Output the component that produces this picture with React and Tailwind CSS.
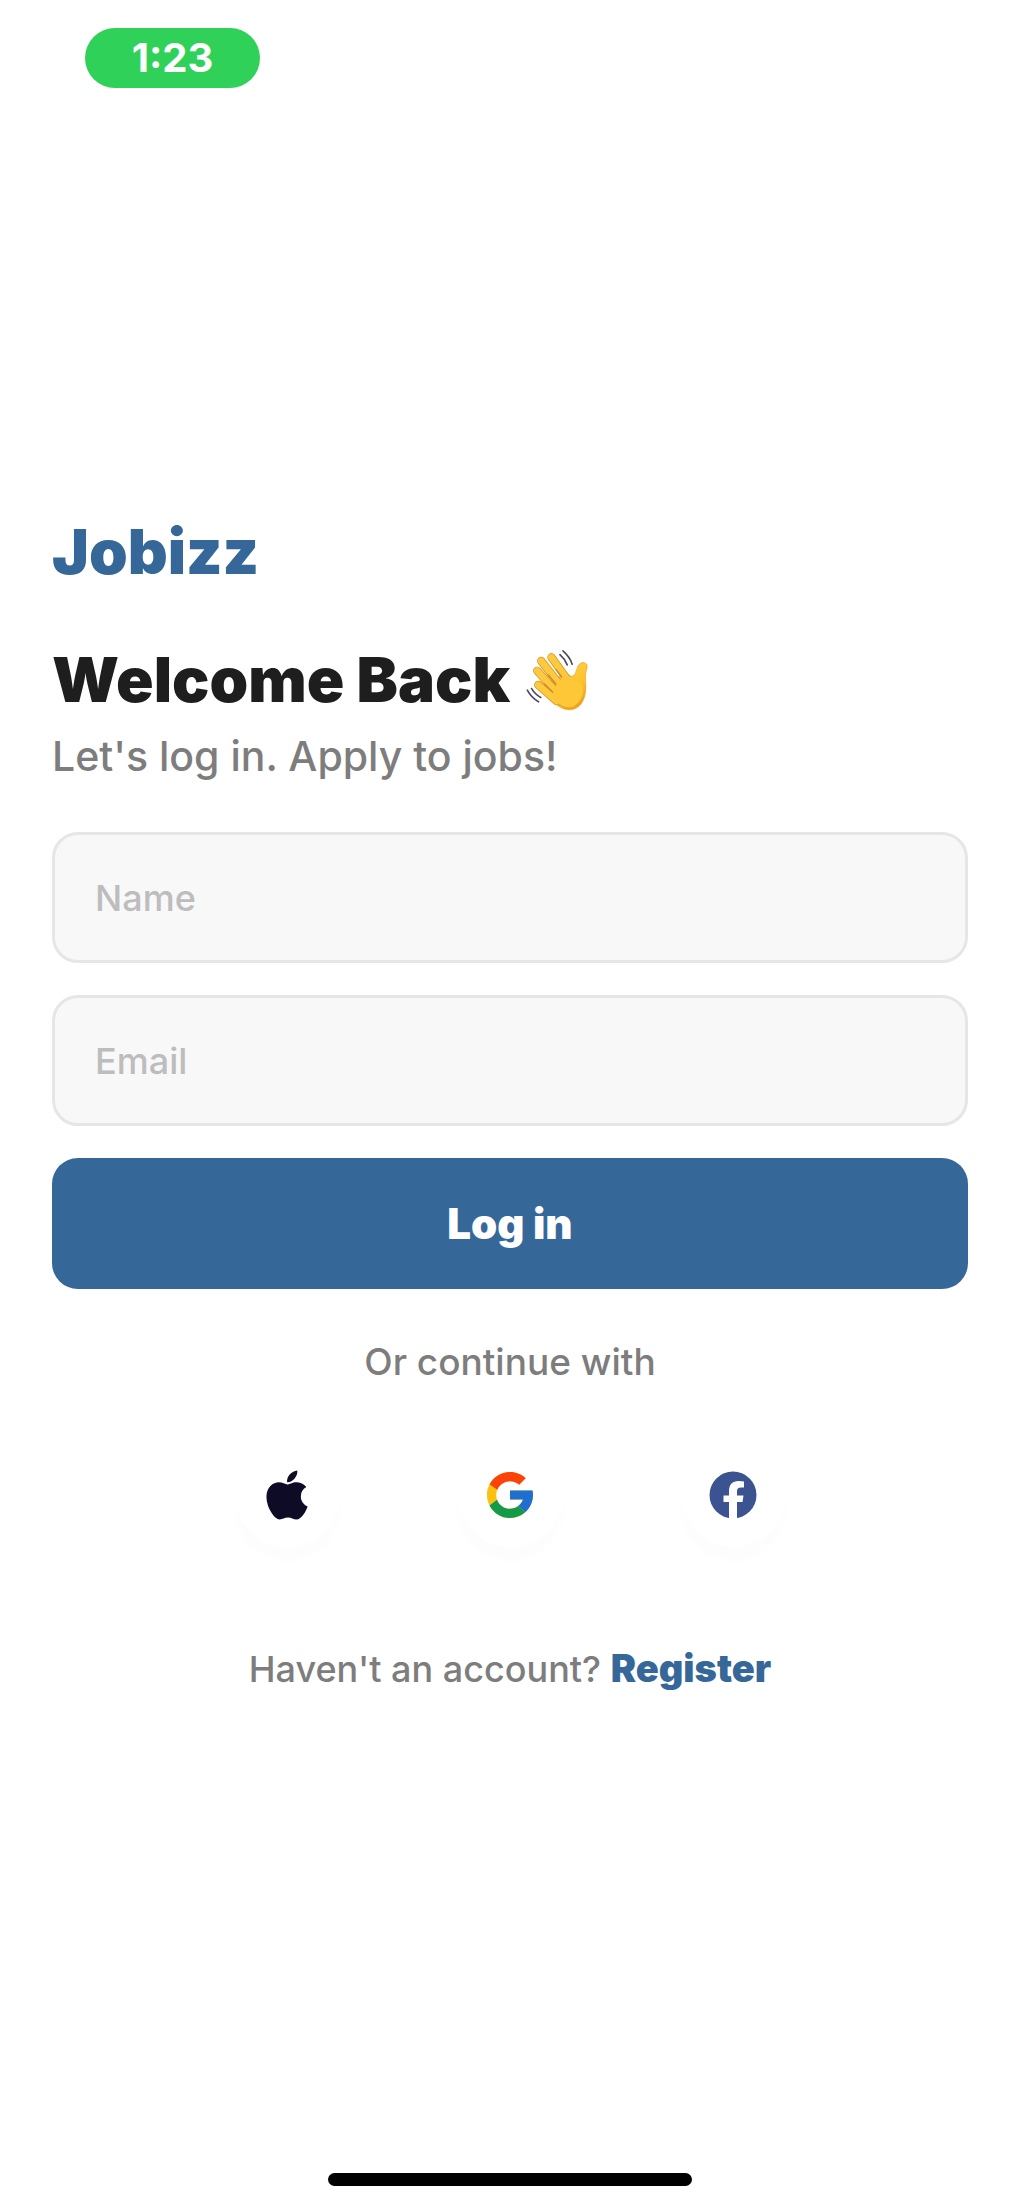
import { FaApple } from "react-icons/fa";

function WavingHand() {
  const fingers = [
    "M160 79 L208 146",
    "M129 90 L190 168",
    "M117 120 L175 185",
    "M120 163 L176 212",
  ];
  return (
    <svg viewBox="84 54 186 188" className="size-[62px]" role="img" aria-label="Waving hand">
      <defs>
        <linearGradient id="palm" x1="0" y1="0" x2="0.4" y2="1">
          <stop offset="0" stopColor="#ffd04a" />
          <stop offset="0.6" stopColor="#fdc52f" />
          <stop offset="1" stopColor="#eda51d" />
        </linearGradient>
      </defs>
      <path
        d="M188 130 L207 127 L217 136 Q231 139 236 119 Q241 96 256 95 Q271 97 268 110 Q260 132 264 156 C267 194 256 229 226 237 C201 243 180 229 160 209 L154 190 Z"
        fill="url(#palm)"
        stroke="#e4a024"
        strokeWidth="2"
      />
      {fingers.map((d) => (
        <g key={d} fill="none" strokeLinecap="round">
          <path d={d} stroke="#d9962b" strokeWidth="25" />
          <path d={d} stroke="#fdca3d" strokeWidth="20" />
        </g>
      ))}
      <path
        d="M176 162 L198 134 L220 139 Q247 150 257 170 Q257 212 226 229 Q205 236 180 218 L161 201 Z"
        fill="#fdc738"
      />
      <g fill="none" stroke="#c98a35" strokeWidth="4" strokeLinecap="round">
        <path d="M174 116 L191 138" />
        <path d="M150 132 L174 160" />
        <path d="M139 160 L164 184" />
      </g>
      <g fill="none" stroke="#4b4a5c" strokeWidth="5" strokeLinecap="round">
        <path d="M195 60 Q215 77 223 100" />
        <path d="M186 71 Q201 84 208 102" />
        <path d="M87 179 Q99 202 121 214" />
        <path d="M100 174 Q111 192 128 201" />
      </g>
    </svg>
  );
}

function GoogleLogo() {
  return (
    <svg viewBox="4 4 40 40" className="size-[46px]" aria-hidden="true">
      <path fill="#fbc112" d="M43.611,20.083H42V20H24v8h11.303c-1.649,4.657-6.08,8-11.303,8c-6.627,0-12-5.373-12-12c0-6.627,5.373-12,12-12c3.059,0,5.842,1.154,7.961,3.039l5.657-5.657C34.046,6.053,29.268,4,24,4C12.955,4,4,12.955,4,24c0,11.045,8.955,20,20,20c11.045,0,20-8.955,20-20C44,22.659,43.862,21.35,43.611,20.083z" />
      <path fill="#fb4208" d="M6.306,14.691l6.571,4.819C14.655,15.108,18.961,12,24,12c3.059,0,5.842,1.154,7.961,3.039l5.657-5.657C34.046,6.053,29.268,4,24,4C16.318,4,9.656,8.337,6.306,14.691z" />
      <path fill="#139a4b" d="M24,44c5.166,0,9.86-1.977,13.409-5.192l-6.19-5.238C29.211,35.091,26.715,36,24,36c-5.202,0-9.619-3.317-11.283-7.946l-6.522,5.025C9.505,39.556,16.227,44,24,44z" />
      <path fill="#1f6fd0" d="M43.611,20.083H42V20H24v8h11.303c-0.792,2.237-2.231,4.166-4.087,5.571l6.193,5.238C36.971,39.205,44,34,44,24C44,22.659,43.862,21.35,43.611,20.083z" />
    </svg>
  );
}

function FacebookLogo() {
  return (
    <svg viewBox="0 0 48 48" className="size-[48px]" aria-hidden="true">
      <circle cx="24" cy="24" r="23.5" fill="#3b5390" />
      <path fill="#fff" d="M20 48V31h-5.500v-6.500H20v-4.500c0-6.500 3.500-10 9.500-10 2 0 4 .2 5.500.5v6h-3c-3 0-4 1.500-4 4v4h6.500l-1 6.500H28v17z" />
    </svg>
  );
}

const providers = [
  { name: "Apple", logo: <FaApple className="size-[56px] text-[#0d0b26]" /> },
  { name: "Google", logo: <GoogleLogo /> },
  { name: "Facebook", logo: <FacebookLogo /> },
];

function Field({ label, type }) {
  return (
    <input
      type={type}
      aria-label={label}
      placeholder={label}
      className="h-[131px] w-full rounded-[26px] border-3 border-[#e6e6e6] bg-[#f8f8f8] px-10 text-[36px] font-medium text-[#1e1e1e] outline-none placeholder:text-[#bdbdbd]"
    />
  );
}

export default function App() {
  return (
    <div className="flex min-h-screen flex-col bg-white font-['Inter',sans-serif] text-[#1e1e1e]">
      <header className="px-[85px] pt-7">
        <div className="flex h-[60px] w-[175px] items-center justify-center rounded-full bg-[#30d158] text-[40px] font-bold text-white">
          1:23
        </div>
      </header>

      <main className="flex flex-1 flex-col px-[52px] pt-[424px]">
        <p className="text-[62px] leading-[80px] font-black text-[#356899]">Jobizz</p>
        <h1 className="mt-12 flex items-center gap-4 text-[62px] leading-[80px] font-black">
          Welcome Back
          <WavingHand />
        </h1>
        <p className="mt-2.5 text-[41px] leading-[52px] font-medium text-[#7d7d7d]">
          Let's log in. Apply to jobs!
        </p>

        <form className="mt-[50px] flex flex-col gap-8" onSubmit={(e) => e.preventDefault()}>
          <Field label="Name" type="text" />
          <Field label="Email" type="email" />
          <button
            type="submit"
            className="h-[131px] w-full rounded-[26px] bg-[#356899] text-[42px] font-black text-white"
          >
            Log in
          </button>
        </form>

        <p className="mt-[49px] text-center text-[37px] leading-[48px] font-medium text-[#7d7d7d]">
          Or continue with
        </p>

        <div className="mt-14 flex justify-center gap-[118px]">
          {providers.map(({ name, logo }) => (
            <button
              key={name}
              type="button"
              aria-label={`Continue with ${name}`}
              className="flex size-[105px] items-center justify-center rounded-full bg-white shadow-[0_14px_12px_rgba(0,0,0,0.012)]"
            >
              {logo}
            </button>
          ))}
        </div>

        <p className="mt-[97px] text-center text-[36px] leading-[48px] font-medium text-[#7d7d7d]">
          Haven't an account?{" "}
          <a href="#register" className="text-[38px] font-black text-[#356899]">
            Register
          </a>
        </p>
      </main>

      <footer className="flex justify-center pb-[21px]">
        <div className="h-[13px] w-[364px] rounded-full bg-black" />
      </footer>
    </div>
  );
}
